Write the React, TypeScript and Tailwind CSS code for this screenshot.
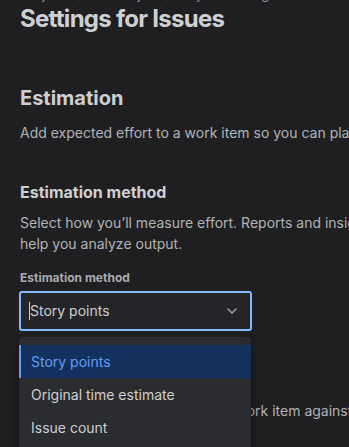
import { ChevronDown } from "lucide-react"

const font = { fontFamily: "Inter, 'Noto Sans', sans-serif" }

export default function App() {
  return (
    <div className="min-h-screen w-full overflow-hidden bg-[#1f1f21] px-5 text-[#a9abaf]" style={font}>
      {/* breadcrumb, scrolled mostly out of view */}
      <div className="mt-[-16px] text-sm leading-5 text-[#8c8f97] whitespace-nowrap">
        Projects / Jira Project / Project settings
      </div>

      <h1 className="mt-[1px] text-[24px] font-bold leading-7 tracking-[-0.03em] text-[#cecfd2]">Settings for Issues</h1>

      <section className="mt-[53px]">
        <h2 className="text-[20px] font-bold leading-6 text-[#cecfd2]">Estimation</h2>
        <p className="mt-[13px] text-sm leading-5 whitespace-nowrap text-[#b0b3b8]">
          Add expected effort to a work item so you can plan and track progress.
        </p>
      </section>

      <section className="mt-[39px]">
        <h3 className="text-base font-bold leading-5 text-[#cecfd2]">Estimation method</h3>
        <p className="mt-[10px] w-[360px] text-sm leading-[21px] text-[#b0b3b8]">
          Select how you’ll measure effort. Reports and insights help you analyze output.
        </p>

        <div className="relative mt-[16px] w-[232px]">
          <label className="block text-xs font-bold leading-4 text-[#a9abaf]">Estimation method</label>
          <div className="ml-[-1px] mt-[5px] flex h-10 items-center justify-between rounded-[3px] border-2 border-[#85b8ff] bg-[#242528] pl-[8px] pr-[10px]">
            <div className="flex items-center">
              <span className="h-[18px] w-px bg-[#cecfd2]" />
              <span className="text-sm text-[#cecfd2]">Story points</span>
            </div>
            <ChevronDown size={16} strokeWidth={2} className="text-[#a9abaf]" />
          </div>

          {/* open listbox */}
          <div className="absolute left-[-1px] top-[67px] z-10 w-[232px] rounded-[4px] bg-[#2b2c2f] pt-2 pb-2 shadow-[0_8px_12px_rgba(0,0,0,0.45),0_0_1px_rgba(0,0,0,0.6)]">
            <div className="flex h-[33px] items-center border-l-2 border-[#669df1] bg-[#12315f] pl-[10px] text-sm text-[#669df1]">
              Story points
            </div>
            <div className="flex h-[33px] items-center pl-3 text-sm text-[#cecfd2]">Original time estimate</div>
            <div className="flex h-[33px] items-center pl-3 text-sm text-[#cecfd2]">Issue count</div>
          </div>
        </div>
      </section>

      <section className="mt-[40px]">
        <h3 className="text-base font-bold leading-5 text-[#cecfd2]">Time tracking</h3>
        <p className="mt-[10px] whitespace-nowrap text-sm leading-5 text-[#b0b3b8]">
          Compare times logged on every work item against its estimate.
        </p>
      </section>
    </div>
  )
}
